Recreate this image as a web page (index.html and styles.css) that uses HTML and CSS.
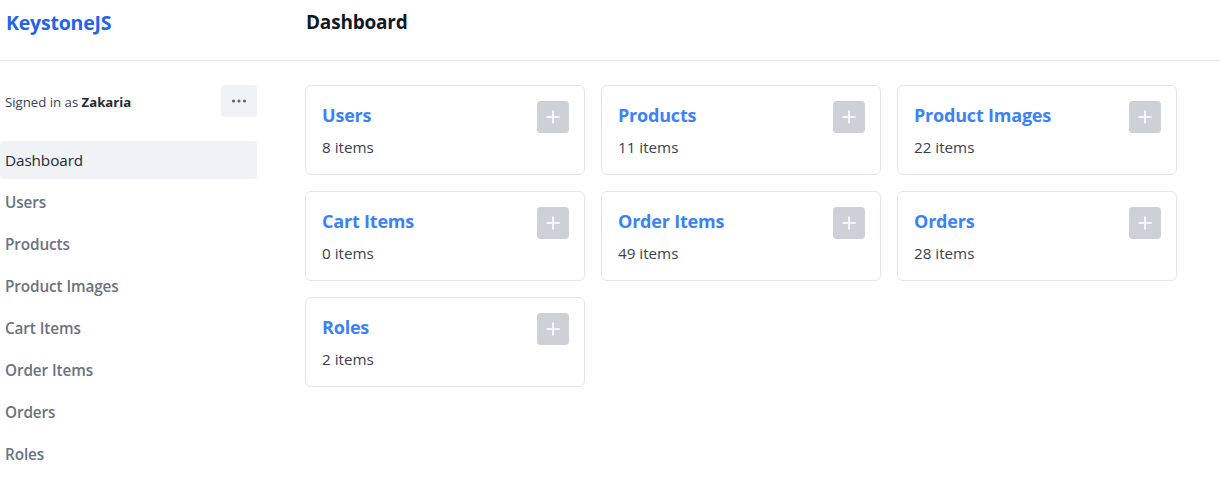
FILE: index.html
```html
<!DOCTYPE html>
<html>
<head>
<meta charset="utf-8">
<link rel="stylesheet" href="styles.css">
</head>
<body>
<div class="app">
  <header class="topbar">
    <div class="brand-cell"><a class="brand">KeystoneJS</a></div>
    <h1 class="page-title">Dashboard</h1>
  </header>
  <div class="body">
    <aside class="sidebar">
      <div class="signed">
        <span class="signed-text">Signed in as <strong>Zakaria</strong></span>
        <button class="more" aria-label="More">
          <svg width="16" height="4" viewBox="0 0 16 4"><circle cx="2.5" cy="2" r="1.6" fill="#5f6873"/><circle cx="8" cy="2" r="1.6" fill="#5f6873"/><circle cx="13.5" cy="2" r="1.6" fill="#5f6873"/></svg>
        </button>
      </div>
      <nav class="nav">
        <a class="nav-item active">Dashboard</a>
        <a class="nav-item">Users</a>
        <a class="nav-item">Products</a>
        <a class="nav-item">Product Images</a>
        <a class="nav-item">Cart Items</a>
        <a class="nav-item">Order Items</a>
        <a class="nav-item">Orders</a>
        <a class="nav-item">Roles</a>
      </nav>
    </aside>
    <main class="main">
      <div class="grid">
        <div class="card"><div class="card-text"><a class="card-title">Users</a><div class="count">8 items</div></div><button class="add"><svg width="14" height="14" viewBox="0 0 14 14"><path d="M7 1v12M1 7h12" stroke="#fff" stroke-width="1.6" stroke-linecap="round"/></svg></button></div>
        <div class="card"><div class="card-text"><a class="card-title">Products</a><div class="count">11 items</div></div><button class="add"><svg width="14" height="14" viewBox="0 0 14 14"><path d="M7 1v12M1 7h12" stroke="#fff" stroke-width="1.6" stroke-linecap="round"/></svg></button></div>
        <div class="card"><div class="card-text"><a class="card-title">Product Images</a><div class="count">22 items</div></div><button class="add"><svg width="14" height="14" viewBox="0 0 14 14"><path d="M7 1v12M1 7h12" stroke="#fff" stroke-width="1.6" stroke-linecap="round"/></svg></button></div>
        <div class="card"><div class="card-text"><a class="card-title">Cart Items</a><div class="count">0 items</div></div><button class="add"><svg width="14" height="14" viewBox="0 0 14 14"><path d="M7 1v12M1 7h12" stroke="#fff" stroke-width="1.6" stroke-linecap="round"/></svg></button></div>
        <div class="card"><div class="card-text"><a class="card-title">Order Items</a><div class="count">49 items</div></div><button class="add"><svg width="14" height="14" viewBox="0 0 14 14"><path d="M7 1v12M1 7h12" stroke="#fff" stroke-width="1.6" stroke-linecap="round"/></svg></button></div>
        <div class="card"><div class="card-text"><a class="card-title">Orders</a><div class="count">28 items</div></div><button class="add"><svg width="14" height="14" viewBox="0 0 14 14"><path d="M7 1v12M1 7h12" stroke="#fff" stroke-width="1.6" stroke-linecap="round"/></svg></button></div>
        <div class="card"><div class="card-text"><a class="card-title">Roles</a><div class="count">2 items</div></div><button class="add"><svg width="14" height="14" viewBox="0 0 14 14"><path d="M7 1v12M1 7h12" stroke="#fff" stroke-width="1.6" stroke-linecap="round"/></svg></button></div>
      </div>
    </main>
  </div>
</div>
</body>
</html>
```
FILE: styles.css
```css
* { box-sizing: border-box; }
html, body { margin: 0; padding: 0; background: #fff; }
body { font-family: "Open Sans", "Noto Sans", Arial, sans-serif; color: #1f2937; }

.topbar {
  height: 61px;
  display: grid;
  grid-template-columns: 306px 1fr;
  align-items: center;
  border-bottom: 1px solid #e1e5e9;
}
.brand-cell { padding-left: 6px; padding-bottom: 16px; }
.brand { color: #2563eb; font-weight: 700; font-size: 19.5px; letter-spacing: -0.2px; text-decoration: none; }
.page-title { margin: 0 0 16px; font-size: 19px; font-weight: 700; color: #111827; letter-spacing: -0.2px; }

.body { display: grid; grid-template-columns: 257px 1fr; }

.sidebar { padding-top: 24px; }
.signed {
  display: flex; align-items: center; justify-content: space-between;
  padding-left: 5px; height: 32px;
  font-size: 13.2px; color: #374151;
}
.signed-text { padding-top: 2px; }
.signed strong { color: #1f2937; font-weight: 700; }
.more {
  width: 36px; height: 32px; border: 0; border-radius: 4px;
  background: #eff3f6; display: flex; align-items: center; justify-content: center; padding: 0;
}
.nav { display: flex; flex-direction: column; gap: 4px; margin-top: 24px; }
.nav-item {
  height: 38px; display: flex; align-items: center; padding-left: 5px;
  font-size: 15.3px; color: #6b7280; font-weight: 600; border-radius: 4px;
  letter-spacing: -0.1px;
}
.nav-item.active { background: #eff3f6; color: #1f2937; font-weight: 500; }

.main { padding: 24px 0 0 48px; }
.grid { display: grid; grid-template-columns: repeat(3, 280px); gap: 16px; }
.card {
  height: 90px; border: 1px solid #e1e5e9; border-radius: 6px;
  padding: 15px 15px 15px 16px;
  display: flex; justify-content: space-between; align-items: flex-start;
}
.card-text { display: flex; flex-direction: column; }
.card-title { color: #3b82f6; font-weight: 700; font-size: 18px; line-height: 28px; letter-spacing: -0.2px; }
.count { font-size: 15.2px; color: #374151; line-height: 20px; margin-top: 8px; }
.add {
  width: 32px; height: 32px; border: 0; border-radius: 4px; background: #cbd1d7;
  display: flex; align-items: center; justify-content: center; padding: 0;
}
```
